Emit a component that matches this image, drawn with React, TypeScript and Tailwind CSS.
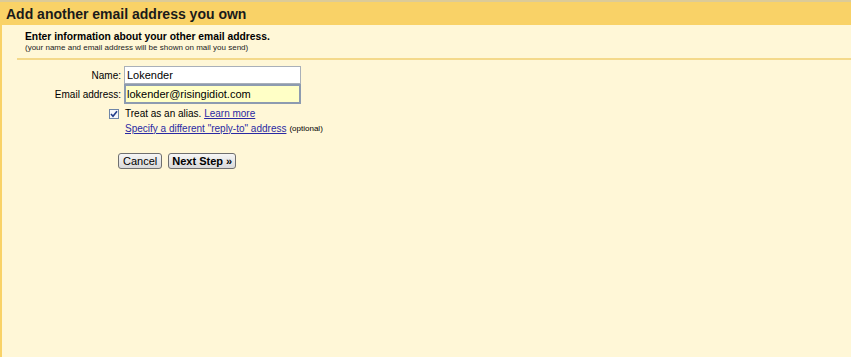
import React from "react";

const font = { fontFamily: '"Liberation Sans", Arial, sans-serif' };

export default function App() {
  return (
    <div
      className="w-[851px] h-[357px] flex flex-col bg-[#fff7d7] text-black overflow-hidden"
      style={font}
    >
      {/* title bar */}
      <div className="h-[25px] shrink-0 border-t-2 border-[#dccb98] bg-[#f9d267] pl-[6px] flex items-center">
        <h1 className="text-[14px] leading-[16px] font-bold text-[#1a1a1a]">
          Add another email address you own
        </h1>
      </div>

      <div className="flex-1 border-l-2 border-[#f9d267] flex flex-col">
        {/* intro */}
        <div className="pl-[23px] pt-[6px]">
          <p className="text-[10.3px] leading-[12px] font-bold">
            Enter information about your other email address.
          </p>
          <p className="text-[8px] leading-[9px] text-[#222]">
            (your name and email address will be shown on mail you send)
          </p>
        </div>
        <div className="ml-[15px] mt-[6px] h-[2px] bg-[#f4d98a]" />

        {/* form */}
        <div className="mt-[6px] flex flex-col">
          <div className="flex items-center h-[18px]">
            <label className="w-[122px] text-right text-[10px] pr-[3px]">
              Name:
            </label>
            <input
              readOnly
              value="Lokender"
              className="w-[177px] h-[18px] border border-[#a9b0b9] bg-white px-[2px] text-[11px] outline-none"
              style={font}
            />
          </div>
          <div className="flex items-center h-[20px]">
            <label className="w-[122px] text-right text-[10px] pr-[3px]">
              Email address:
            </label>
            <input
              readOnly
              value="lokender@risingidiot.com"
              className="w-[177px] h-[20px] border-2 border-[#8d9bb0] bg-[#ffffc6] px-[1px] text-[11px] outline-none"
              style={font}
            />
          </div>

          <div className="flex items-center mt-[3px] h-[13px]">
            <div className="w-[107px]" />
            <span className="w-[10px] h-[10px] border border-[#6f86a8] bg-[#f4f6fa] flex items-center justify-center">
              <svg width="8" height="8" viewBox="0 0 8 8">
                <path
                  d="M1 4 L3 6.2 L7 1.2"
                  fill="none"
                  stroke="#1f3a8a"
                  strokeWidth="1.6"
                />
              </svg>
            </span>
            <span className="ml-[6px] text-[10px] leading-[12px]">
              Treat as an alias.{" "}
              <a className="text-[#2a2aa3] underline">Learn more</a>
            </span>
          </div>
          <div className="flex items-center mt-[2px] h-[13px] pl-[123px]">
            <a className="text-[10px] leading-[12px] text-[#2a2aa3] underline">
              Specify a different "reply-to" address
            </a>
            <span className="ml-[3px] text-[8px]">(optional)</span>
          </div>

          <div className="flex gap-[6px] mt-[18px] pl-[116px]">
            <button
              className="h-[16px] px-[4px] border border-[#6f6f6f] rounded-[3px] bg-gradient-to-b from-[#f6f6f6] to-[#d9d9d9] text-[11px] leading-[13px]"
              style={font}
            >
              Cancel
            </button>
            <button
              className="h-[16px] px-[3px] border border-[#6f6f6f] rounded-[3px] bg-gradient-to-b from-[#f6f6f6] to-[#d9d9d9] text-[11px] leading-[13px] font-bold"
              style={font}
            >
              Next Step »
            </button>
          </div>
        </div>
      </div>
    </div>
  );
}
